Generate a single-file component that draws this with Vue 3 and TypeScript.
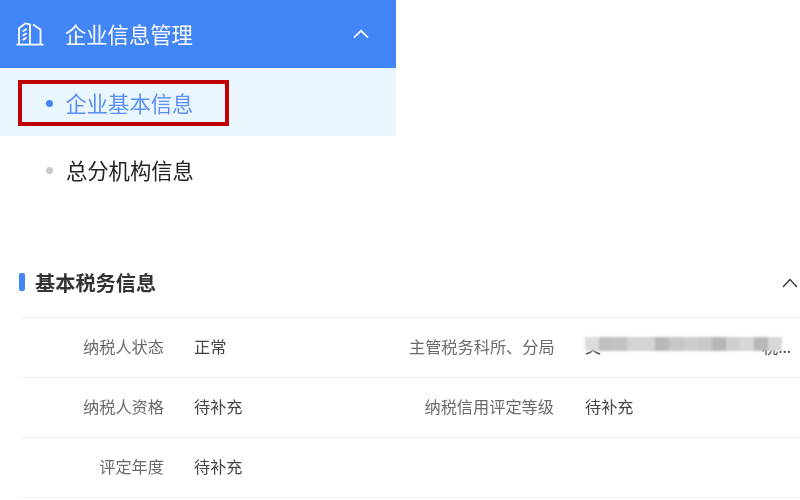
<script setup lang="ts">
interface Field {
  label: string
  value: string
  masked?: boolean
}

const fields: Field[] = [
  { label: '纳税人状态', value: '正常' },
  { label: '主管税务科所、分局', value: '又', masked: true },
  { label: '纳税人资格', value: '待补充' },
  { label: '纳税信用评定等级', value: '待补充' },
  { label: '评定年度', value: '待补充' },
  { label: '', value: '' },
]

const maskShades = ['#dcdcdc', '#c0c0c0', '#c2c2c2', '#d4d4d4', '#d4d4d4', '#b9b9b9', '#c6c6c6', '#cdcdcd', '#c8c8c8', '#b6b6b6', '#cfcfcf', '#d6d6d6', '#b8b8b8', '#d8d8d8']
</script>

<template>
  <div class="page">
    <nav class="menu">
      <div class="menu-head">
        <svg class="head-icon" width="28" height="28" viewBox="0 0 28 28" fill="none" stroke="#fff" stroke-width="1.8">
          <path d="M0.5 24.6h27" />
          <path d="M3 24.5V8.2L9.5 3.4 14 4.4V24.5" />
          <path d="M17 4.6 24.5 9.4V24.5" />
          <path d="M6.6 11.6 10.6 9M6.6 15.8 10.6 13.2M6.6 20 10.6 17.4" />
        </svg>
        <span class="head-title">企业信息管理</span>
        <svg class="head-arrow" width="16" height="10" viewBox="0 0 16 10" fill="none" stroke="#fff" stroke-width="1.7">
          <path d="M1 8.5 8 1.8 15 8.5" />
        </svg>
      </div>
      <div class="menu-item active">
        <div class="mark">
          <i class="dot"></i>
          <span>企业基本信息</span>
        </div>
      </div>
      <div class="menu-item">
        <div class="plain">
          <i class="dot"></i>
          <span>总分机构信息</span>
        </div>
      </div>
    </nav>

    <section class="panel">
      <header class="panel-head">
        <i class="bar"></i>
        <h2>基本税务信息</h2>
        <svg class="panel-arrow" width="16" height="10" viewBox="0 0 16 10" fill="none" stroke="#333" stroke-width="1.3">
          <path d="M1 9 8 1.5 15 9" />
        </svg>
      </header>
      <div class="grid">
        <div v-for="(f, i) in fields" :key="i" class="cell">
          <span class="label">{{ f.label }}</span>
          <span class="value" :class="{ masked: f.masked }">
            {{ f.value }}
            <template v-if="f.masked">
              <span class="tail">税<span class="ell">…</span></span>
              <span class="mask">
                <i v-for="(s, n) in maskShades" :key="n" :style="{ background: s }"></i>
              </span>
            </template>
          </span>
        </div>
      </div>
    </section>
  </div>
</template>

<style>
html, body { margin: 0; background: #fff; }
</style>

<style scoped>
.page {
  width: 800px;
  height: 500px;
  overflow: hidden;
  background: #fff;
  font-family: "Noto Sans CJK SC", "Noto Sans", sans-serif;
  filter: blur(0.4px);
}
.menu { width: 396px; }
.menu-head {
  height: 68px;
  background: #4285f6;
  display: flex;
  align-items: center;
  padding: 0 27px 0 16px;
  box-sizing: border-box;
  color: #fff;
}
.head-icon { flex: none; }
.head-title { margin-left: 21px; font-size: 21.3px; flex: 1; position: relative; top: -1px; }
.menu-item {
  height: 68px;
  display: flex;
  align-items: center;
  padding-left: 18px;
  font-size: 21.3px;
  color: #222;
}
.menu-item.active { background: #eaf6fe; color: #5b8ff5; }
.mark, .plain {
  width: 211px;
  height: 46px;
  box-sizing: border-box;
  display: flex;
  align-items: center;
  padding-left: 28px;
  gap: 13px;
}
.mark { border: 4.5px solid #c00000; padding-left: 23.5px; margin-top: 1px; }
.plain { margin-top: -1px; }
.dot { width: 7px; height: 7px; border-radius: 50%; background: #c9c9c9; flex: none; margin-top: 1px; }
.active .dot { background: #4285f6; }

.panel { margin: 54px 0 0 19px; }
.panel-head {
  height: 50px;
  display: flex;
  align-items: center;
  border-bottom: 1px solid #f0f0f0;
  padding-bottom: 9px;
}
.bar { width: 6px; height: 18px; border-radius: 2px; background: #4285f6; margin: -3px 10px 0 0; }
.panel-head h2 { margin: -2px 0 0; font-size: 20.2px; font-weight: 700; color: #333; flex: 1; }
.panel-arrow { margin-right: 2px; }
.grid { display: grid; grid-template-columns: 390px 391px; grid-auto-rows: 60px; }
.cell {
  display: flex;
  align-items: center;
  gap: 30px;
  border-bottom: 1px solid #f0f0f0;
  font-size: 16.2px;
  padding-bottom: 4px;
  box-sizing: border-box;
  white-space: nowrap;
}
.label { width: 145px; text-align: right; color: #6a6a6a; flex: none; }
.value { color: #444; position: relative; }
.cell:nth-child(even) .value { margin-left: 1px; }
.value.masked { display: flex; width: 206px; justify-content: space-between; }
.tail { color: #444; }
.ell { font-family: "Noto Sans", sans-serif; }
.mask {
  position: absolute;
  left: 0;
  top: 3px;
  width: 197px;
  height: 14px;
  display: flex;
  filter: blur(1.2px);
}
.mask i { flex: 1; }
</style>
